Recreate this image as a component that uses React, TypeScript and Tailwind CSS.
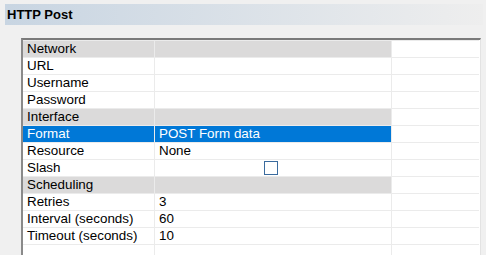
import React from "react";

type Row = { label: string; value?: string; kind?: "group" | "sel" | "check" | "empty" };

const rows: Row[] = [
  { label: "Network", kind: "group" },
  { label: "URL" },
  { label: "Username" },
  { label: "Password" },
  { label: "Interface", kind: "group" },
  { label: "Format", value: "POST Form data", kind: "sel" },
  { label: "Resource", value: "None" },
  { label: "Slash", kind: "check" },
  { label: "Scheduling", kind: "group" },
  { label: "Retries", value: "3" },
  { label: "Interval (seconds)", value: "60" },
  { label: "Timeout (seconds)", value: "10" },
  { label: "", kind: "empty" },
];

export default function App() {
  return (
    <div
      className="w-[486px] h-[255px] bg-[#f0f0f0] overflow-hidden text-black"
      style={{ fontFamily: '"Liberation Sans", Arial, sans-serif' }}
    >
      <div className="ml-[5px] mr-[3px] mt-[4px] h-[21px] bg-gradient-to-r from-[#c8d5e2] to-[#eeeeee] pl-[2px] text-[13px] font-bold leading-[21px]">
        HTTP Post
      </div>
      <div className="ml-[21px] mt-[13px] w-[460px] border-t-2 border-l-2 border-t-[#7a7a7a] border-l-[#8a8a8a] border-r border-r-[#e3e3e3] bg-white text-[13.4px]">
        {rows.map((r, i) => {
          const group = r.kind === "group";
          const sel = r.kind === "sel";
          return (
            <div key={i} className="grid grid-cols-[132px_237px_87px] h-[17px]">
              <div
                className={`border-r border-t border-[#ebebeb] pl-[4px] leading-[16px] whitespace-nowrap ${
                  group ? "bg-[#dbdada]" : sel ? "bg-[#0078d7] text-white" : "bg-white"
                }`}
              >
                {r.label}
              </div>
              <div
                className={`border-r border-t border-[#ebebeb] pl-[4px] leading-[16px] whitespace-nowrap flex ${
                  group ? "bg-[#dbdada]" : sel ? "bg-[#0078d7] text-white" : "bg-white"
                } ${r.kind === "check" ? "items-center justify-center pr-[8px]" : ""}`}
              >
                {r.kind === "check" ? (
                  <span className="block w-[14px] h-[14px] border border-[#3a6b9e] bg-white" />
                ) : (
                  r.value
                )}
              </div>
              <div className="border-t border-[#ebebeb] bg-white" />
            </div>
          );
        })}
      </div>
    </div>
  );
}
